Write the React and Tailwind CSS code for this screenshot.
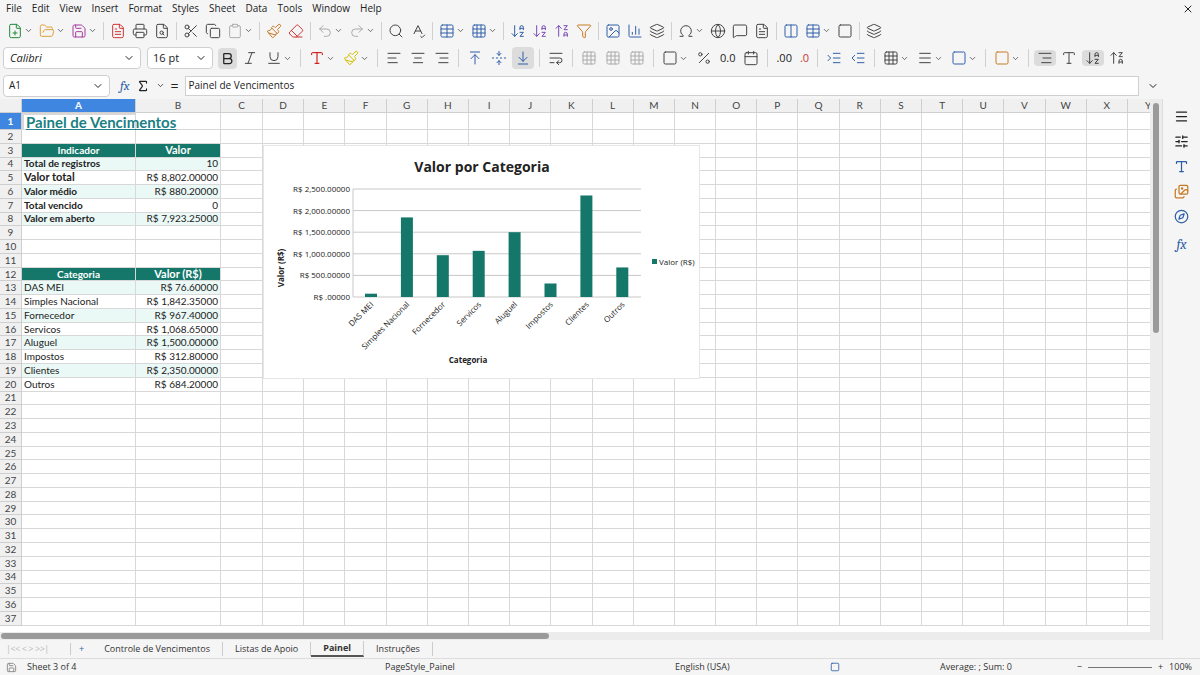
import React from 'react'
import { FilePlus, FolderOpen, Save, FileText, Printer, FileSearch, Scissors, Copy, Clipboard, Paintbrush, Eraser, Undo2, Redo2, Search, SpellCheck, Table, Grid3x3, ArrowDownAZ, ArrowUpZA, Filter, Image, BarChart3, Omega, Globe, MessageSquare, Columns2, Sigma, AlignLeft, AlignCenter, AlignRight, Percent, Calendar, Square, ChevronDown, X, Menu, SlidersHorizontal, Type, Compass, Images, Bold, Italic, Underline, ArrowUpToLine, ArrowDownToLine, FoldVertical, WrapText, Indent, Outdent, Layers } from 'lucide-react'

const cols = [['A', 114], ['B', 85], ['C', 42]].concat('DEFGHIJKLMNOPQRSTUVWXY'.split('').map(c => [c, 41.2]))

const teal = '#14776a'
const kpis = [['Total de registros', '10'], ['Valor total', 'R$ 8,802.00000'], ['Valor médio', 'R$ 880.20000'], ['Total vencido', '0'], ['Valor em aberto', 'R$ 7,923.25000']]
const cats = [['DAS MEI', 76.6], ['Simples Nacional', 1842.35], ['Fornecedor', 967.4], ['Servicos', 1068.65], ['Aluguel', 1500], ['Impostos', 312.8], ['Clientes', 2350], ['Outros', 684.2]]
const fmt = v => 'R$ ' + v.toLocaleString('en-US', { minimumFractionDigits: 5, maximumFractionDigits: 5 })

function Cell({ w, children, className = '' }) {
  return <div style={{ width: w }} className={'shrink-0 h-full border-r border-b border-[#d8d8d8] overflow-visible whitespace-nowrap flex items-center px-[2px] ' + className}>{children}</div>
}

function rowContent(r) {
  const a = cols[0][1], b = cols[1][1]
  const stripe = 'bg-[#eaf8f6]'
  if (r === 1) return [<Cell key="a" w={a} className="border-2 border-[#2e6fd1] text-[15px] font-bold text-[#1c7f84] underline relative z-10">Painel de Vencimentos</Cell>]
  if (r === 3 || r === 12) return [
    <Cell key="a" w={a} className={`justify-center bg-[#14776a] text-white font-bold`}>{r === 3 ? 'Indicador' : 'Categoria'}</Cell>,
    <Cell key="b" w={b} className="justify-center bg-[#14776a] text-white font-bold text-[11px]">{r === 3 ? 'Valor' : 'Valor (R$)'}</Cell>]
  if (r >= 4 && r <= 8) { const k = kpis[r - 4]; const s = r % 2 === 0 ? stripe : ''; return [
    <Cell key="a" w={a} className={`font-bold ${s} ${r === 5 ? 'text-[11px]' : ''}`}>{k[0]}</Cell>,
    <Cell key="b" w={b} className={`justify-end ${s}`}>{k[1]}</Cell>] }
  if (r >= 13 && r <= 20) { const c = cats[r - 13]; const s = r % 2 === 1 ? stripe : ''; return [
    <Cell key="a" w={a} className={s}>{c[0]}</Cell>,
    <Cell key="b" w={b} className={`justify-end ${s}`}>{fmt(c[1])}</Cell>] }
  return []
}

function Chart() {
  const y0 = 151, top = 43, h = 108
  return (
    <div className="absolute left-[263px] top-[32px] w-[437px] h-[234px] bg-white border border-[#e6e6e6] z-20">
      <svg width="437" height="234" fontFamily="'Open Sans', sans-serif">
        <text x="218" y="26" textAnchor="middle" fontSize="14" fontWeight="bold" fill="#222">Valor por Categoria</text>
        {[0, 500, 1000, 1500, 2000, 2500].map(v => {
          const y = y0 - v / 2500 * h
          return <g key={v}>
            <line x1="89" x2="377" y1={y} y2={y} stroke="#c8c8c8" strokeWidth="1" />
            <text x="86" y={y + 3} textAnchor="end" fontSize="8" fill="#222">{v === 0 ? 'R$ .00000' : fmt(v)}</text>
          </g>
        })}
        <line x1="89" x2="89" y1={top} y2={y0} stroke="#c8c8c8" />
        {cats.map((c, i) => {
          const x = 107 + i * 35.9
          const bh = c[1] / 2500 * h
          return <g key={i}>
            <rect x={x - 6} y={y0 - bh} width="12" height={bh} fill={teal} />
            <text transform={`translate(${x + 3},${y0 + 8}) rotate(-45)`} textAnchor="end" fontSize="8" fill="#222">{c[0]}</text>
          </g>
        })}
        <text transform="translate(20,122) rotate(-90)" textAnchor="middle" fontSize="8" fontWeight="bold" fill="#222">Valor (R$)</text>
        <text x="204" y="217" textAnchor="middle" fontSize="8" fontWeight="bold" fill="#222">Categoria</text>
        <rect x="388" y="113" width="5" height="5" fill={teal} />
        <text x="395" y="119" fontSize="8" fill="#222">Valor (R$)</text>
      </svg>
    </div>
  )
}

const I = ({ C, c = '#444', dd }) => <span className="flex items-center gap-[1px] px-[3px]"><C size={16} color={c} strokeWidth={1.5} />{dd && <ChevronDown size={9} color="#444" />}</span>
const Sep = () => <span className="w-px h-[18px] bg-[#d0d0d0] mx-[3px]" />

export default function App() {
  const rows = Array.from({ length: 37 }, (_, i) => i + 1)
  return (
    <div className="w-[1200px] h-[675px] overflow-hidden bg-[#f5f5f5] text-[#222] flex flex-col" style={{ fontFamily: "'Open Sans', 'Noto Sans', sans-serif" }}>
      <div className="h-[17px] flex items-center text-[10px] gap-[10px] px-[6px]">
        {['File', 'Edit', 'View', 'Insert', 'Format', 'Styles', 'Sheet', 'Data', 'Tools', 'Window', 'Help'].map(m => <span key={m}>{m}</span>)}
        <X size={12} className="ml-auto" />
      </div>
      <div className="h-[27px] flex items-center px-[4px]">
        <I C={FilePlus} c="#1e8a3a" dd /><I C={FolderOpen} c="#e0a13a" dd /><I C={Save} c="#a33aa0" dd /><Sep />
        <I C={FileText} c="#c33" /><I C={Printer} /><I C={FileSearch} /><Sep />
        <I C={Scissors} /><I C={Copy} /><I C={Clipboard} c="#aaa" dd /><Sep /><I C={Paintbrush} c="#c87a22" /><I C={Eraser} c="#c33" /><Sep />
        <I C={Undo2} c="#aaa" dd /><I C={Redo2} c="#aaa" dd /><Sep /><I C={Search} /><I C={SpellCheck} /><Sep />
        <I C={Table} c="#2f5fa8" dd /><I C={Grid3x3} c="#2f5fa8" dd /><Sep /><I C={ArrowDownAZ} c="#2f5fa8" /><I C={ArrowDownAZ} c="#7a4ab8" /><I C={ArrowUpZA} c="#7a4ab8" /><I C={Filter} c="#c87a22" /><Sep />
        <I C={Image} c="#2f5fa8" /><I C={BarChart3} c="#2f5fa8" /><I C={Layers} /><Sep /><I C={Omega} dd /><I C={Globe} /><I C={MessageSquare} /><I C={FileText} /><Sep />
        <I C={Columns2} c="#2f5fa8" /><I C={Table} c="#2f5fa8" dd /><I C={Square} /><Sep /><I C={Layers} />
      </div>
      <div className="h-[28px] flex items-center px-[3px] gap-[2px]">
        <div className="w-[138px] h-[22px] bg-white border border-[#cfcfcf] rounded flex items-center text-[11px] italic pl-[6px]">Calibri<ChevronDown size={12} className="ml-auto mr-[5px]" /></div>
        <div className="w-[66px] h-[22px] bg-white border border-[#cfcfcf] rounded flex items-center text-[11px] pl-[5px] ml-[4px]">16 pt<ChevronDown size={12} className="ml-auto mr-[5px]" /></div>
        <span className="ml-[3px] bg-[#dcdcdc] rounded px-[2px] py-[3px]"><Bold size={15} strokeWidth={2} /></span>
        <I C={Italic} /><I C={Underline} dd /><Sep /><I C={Type} c="#c00" dd /><I C={Paintbrush} c="#d4c000" dd /><Sep />
        <I C={AlignLeft} /><I C={AlignCenter} /><I C={AlignRight} /><Sep /><I C={ArrowUpToLine} c="#2f5fa8" /><I C={FoldVertical} c="#2f5fa8" />
        <span className="bg-[#dcdcdc] rounded py-[3px]"><I C={ArrowDownToLine} c="#2f5fa8" /></span><Sep /><I C={WrapText} /><Sep />
        <I C={Grid3x3} c="#aaa" /><I C={Grid3x3} c="#aaa" /><I C={Grid3x3} c="#aaa" /><Sep /><I C={Square} dd /><I C={Percent} /><span className="text-[11px] px-[3px]">0.0</span><I C={Calendar} /><Sep />
        <span className="text-[11px] px-[3px]">.00</span><span className="text-[11px] px-[3px] text-[#c33]">.0</span><Sep /><I C={Indent} c="#2f5fa8" /><I C={Outdent} c="#2f5fa8" /><Sep />
        <I C={Grid3x3} dd /><I C={Menu} dd /><I C={Square} c="#2f5fa8" dd /><Sep /><I C={Square} c="#c87a22" dd /><Sep />
        <span className="bg-[#dcdcdc] rounded"><I C={AlignRight} /></span><I C={Type} /><span className="bg-[#dcdcdc] rounded"><I C={ArrowDownAZ} /></span><I C={ArrowUpZA} />
      </div>
      <div className="h-[27px] flex items-center px-[3px] gap-[6px] text-[10px]">
        <div className="w-[107px] h-[22px] bg-white border border-[#cfcfcf] rounded flex items-center pl-[5px]">A1<ChevronDown size={12} className="ml-auto mr-[5px]" /></div>
        <span className="italic text-[#2f5fa8] font-serif text-[13px] ml-[4px]">fx</span><Sigma size={14} /><ChevronDown size={9} /><span className="text-[14px]">=</span>
        <div className="flex-1 h-[20px] bg-white border border-[#cfcfcf] flex items-center pl-[3px] mr-[2px]">Painel de Vencimentos</div>
        <ChevronDown size={12} className="mr-[38px]" />
      </div>
      <div className="flex flex-1 min-h-0">
        <div className="flex-1 flex flex-col min-w-0 bg-white">
          <div className="flex-1 flex min-h-0">
            <div className="w-[1150px] overflow-hidden relative text-[10px]" style={{ fontFamily: 'Lato, sans-serif' }}>
              <div className="flex h-[14px] bg-[#f0f0f0]">
                <div className="w-[22px] shrink-0 border-r border-b border-[#cfcfcf]" />
                {cols.map(([c, w], i) => <div key={c} style={{ width: w }} className={`shrink-0 flex items-center justify-center border-r border-b border-[#cfcfcf] ${i === 0 ? 'bg-[#3e86df] text-white font-bold' : 'text-[#444]'}`}>{c}</div>)}
              </div>
              <div className="relative">
                {rows.map(r => (
                  <div key={r} className={`flex ${r === 1 ? 'h-[17px]' : 'h-[13.78px]'}`}>
                    <div className={`w-[22px] shrink-0 flex items-center justify-center border-r border-b border-[#cfcfcf] ${r === 1 ? 'bg-[#3e86df] text-white font-bold' : 'bg-[#f0f0f0] text-[#444]'}`}>{r}</div>
                    {rowContent(r)}
                    {cols.slice(rowContent(r).length).map(([c, w]) => <Cell key={c} w={w} />)}
                  </div>
                ))}
                <Chart />
              </div>
            </div>
            <div className="w-[12px] bg-[#ececec] flex justify-center pt-[4px]"><div className="w-[6px] h-[230px] bg-[#9a9a9a] rounded" /></div>
          </div>
          <div className="h-[8px] bg-[#ececec] flex items-center"><div className="w-[548px] h-[6px] bg-[#9a9a9a] rounded ml-[1px]" /></div>
        </div>
        <div className="w-[38px] flex flex-col items-center gap-[10px] pt-[10px] bg-[#f5f5f5] border-l border-[#ddd]">
          <Menu size={15} /><SlidersHorizontal size={15} /><Type size={15} color="#2f5fa8" /><Images size={15} color="#c87a22" /><Compass size={15} color="#2f5fa8" /><span className="italic font-serif text-[#2f5fa8] text-[14px]">fx</span>
        </div>
      </div>
      <div className="h-[18px] flex items-center text-[9px] text-[#333] bg-[#f5f5f5]">
        <span className="w-[70px] text-[#bbb] pl-[6px] tracking-tighter">|&lt;&lt; &lt;  &gt; &gt;&gt;|</span>
        <span className="w-px h-[12px] bg-[#ccc]" /><span className="px-[8px] text-[#2f5fa8]">+</span>
        {['Controle de Vencimentos', 'Listas de Apoio', 'Painel', 'Instruções'].map(t => <span key={t} className={`px-[12px] border-r border-[#ccc] ${t === 'Painel' ? 'font-bold border-b-2 border-b-[#555]' : ''}`}>{t}</span>)}
      </div>
      <div className="h-[17px] flex items-center text-[9px] text-[#333] border-t border-[#ddd]">
        <Save size={11} className="ml-[6px] text-[#888]" /><span className="ml-[10px] w-[140px]">Sheet 3 of 4</span>
        <span className="ml-[218px] w-[290px]">PageStyle_Painel</span><span className="w-[155px]">English (USA)</span>
        <Square size={10} className="text-[#2f5fa8]" /><span className="ml-[100px]">Average: ; Sum: 0</span>
        <span className="ml-auto flex items-center gap-[6px] mr-[8px]">−<span className="w-[64px] h-px bg-[#777]" />+<span>100%</span></span>
      </div>
    </div>
  )
}
